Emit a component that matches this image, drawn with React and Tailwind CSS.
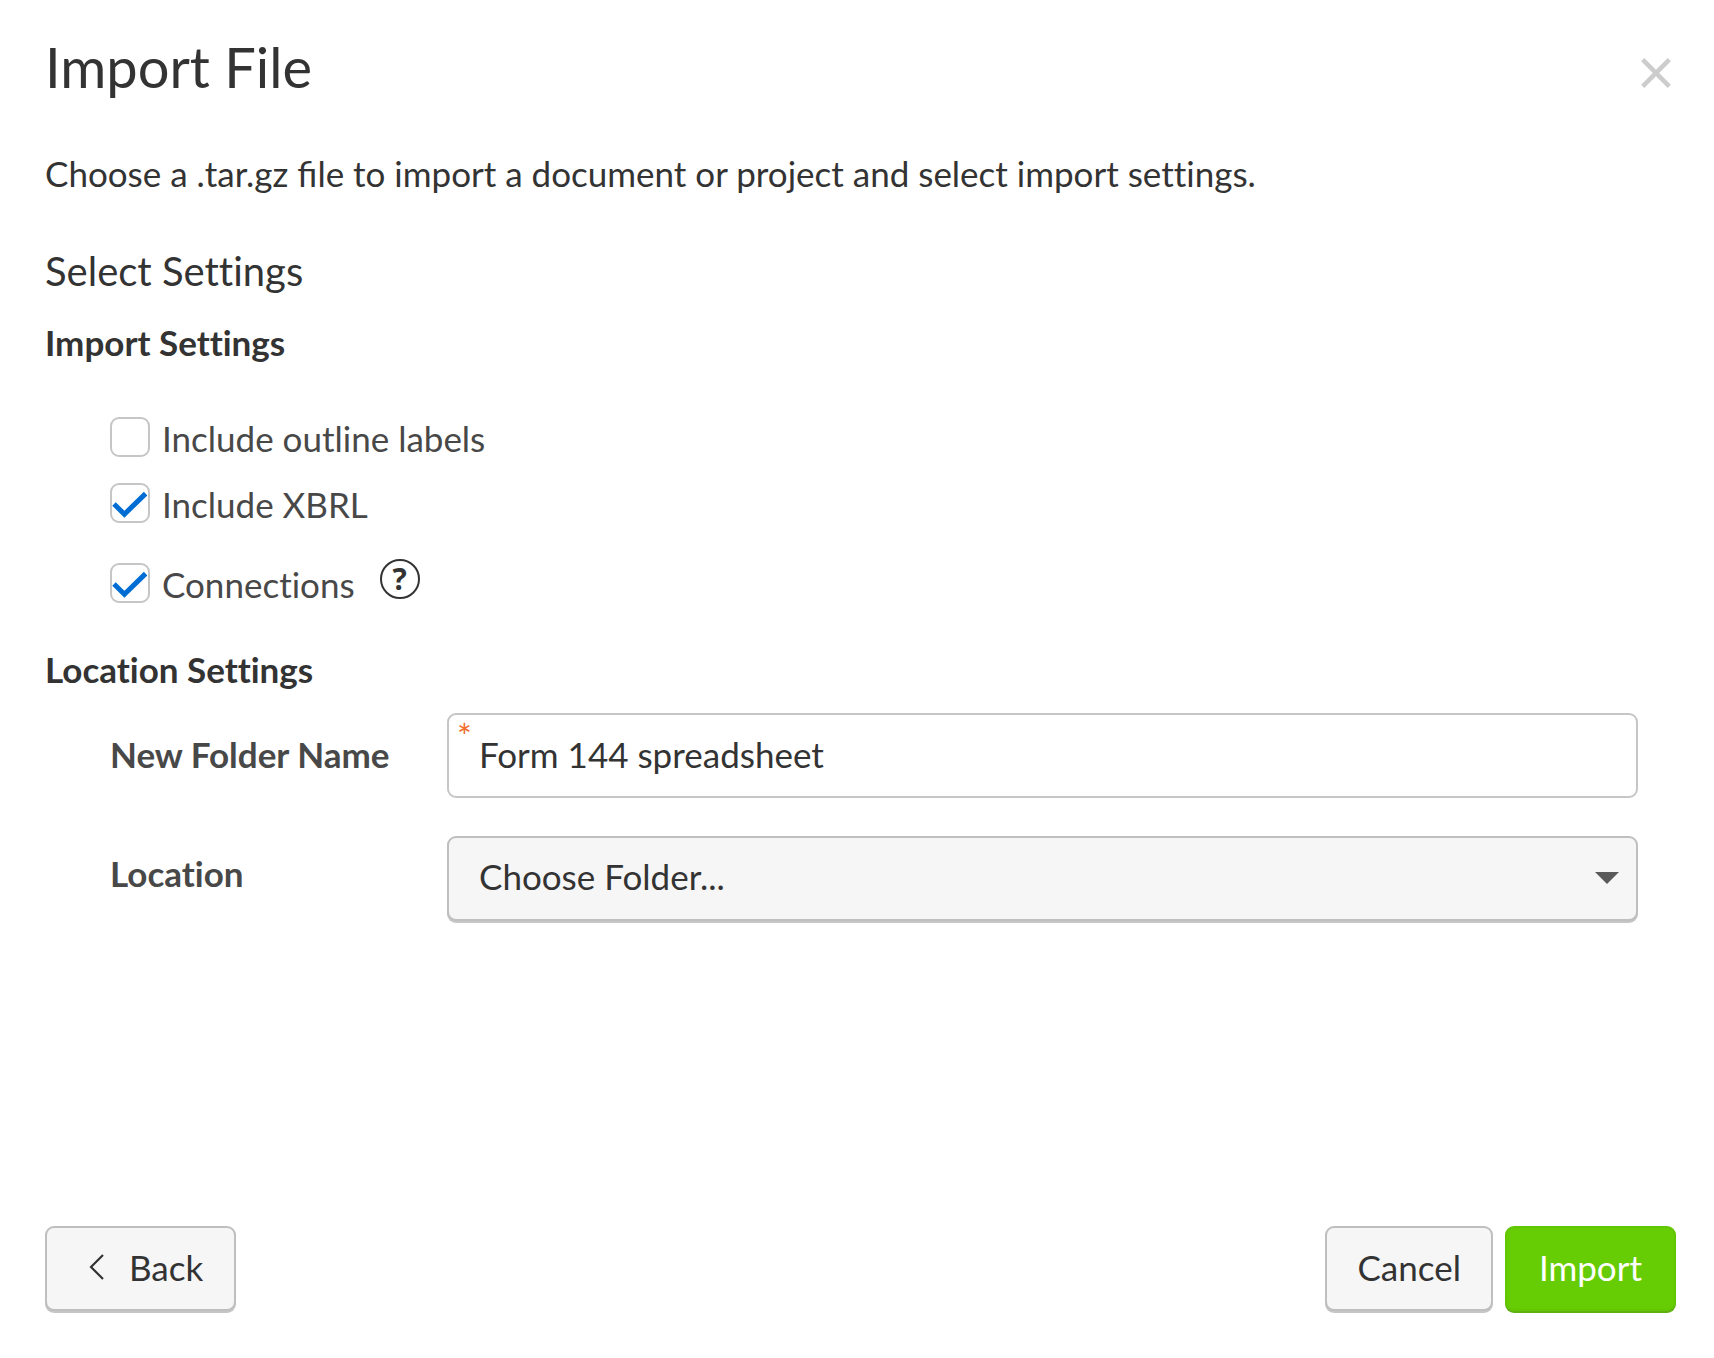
import React, { useState } from 'react'

const Checkbox = ({ id, label, defaultChecked }) => (
  <div className="flex items-start gap-3">
    <span className="grid size-10 shrink-0">
      <input
        id={id}
        type="checkbox"
        defaultChecked={defaultChecked}
        className="peer col-start-1 row-start-1 size-10 appearance-none rounded-[9px] border-2 border-[#c6c6c6] bg-white"
      />
      <svg
        viewBox="0 0 40 40"
        className="pointer-events-none invisible col-start-1 row-start-1 size-10 peer-checked:visible"
        fill="none"
        stroke="#006dd5"
        strokeWidth="5"
        aria-hidden="true"
      >
        <path d="M4 21 14.4 31.2 35.6 10.6" />
      </svg>
    </span>
    <label htmlFor={id} className="leading-[42px] text-[#484848]">{label}</label>
  </div>
)

const buttonBase = 'flex h-[85px] items-center rounded-[9px] border-2 pb-1'
const grayButton = 'border-[#bfbfbf] bg-[#f6f6f6] shadow-[0_2px_0_#c6c6c6]'

const App = () => {
  const [folderName, setFolderName] = useState('Form 144 spreadsheet')

  return (
    <form
      onSubmit={(e) => e.preventDefault()}
      className="flex min-h-screen flex-col bg-white pt-[33px] pr-[38px] pb-[47px] pl-[45px] font-['Lato',sans-serif] text-[35px] leading-[44px] text-[#333] [font-variant-ligatures:none]"
    >
      <header className="flex items-end justify-between">
        <h1 className="text-[56px] leading-[68px]">Import File</h1>
        <button type="button" aria-label="Close" className="flex h-14 w-10 items-center justify-center">
          <svg viewBox="0 0 30 30" className="size-[30px]" stroke="#cccccc" strokeWidth="4.5" aria-hidden="true">
            <path d="M1.7 1.7 28.3 28.3M28.3 1.7 1.7 28.3" />
          </svg>
        </button>
      </header>

      <p className="mt-[50px]">
        Choose a .tar.gz <span className="[font-variant-ligatures:normal]">file</span> to import a document or project and select import settings.
      </p>

      <h2 className="mt-[52px] text-[40px] leading-[48px]">Select Settings</h2>

      <h3 className="mt-[25px] font-bold">Import Settings</h3>
      <div className="mt-[53px] pl-[65px]">
        <Checkbox id="outline-labels" label="Include outline labels" />
        <div className="mt-6">
          <Checkbox id="xbrl" label="Include XBRL" defaultChecked />
        </div>
        <div className="mt-[34px] flex items-end gap-[25px]">
          <Checkbox id="connections" label="Connections" defaultChecked />
          <button type="button" aria-label="About connections" className="flex h-[46px] items-start">
            <span className="flex size-10 items-center justify-center rounded-full border-2 border-[#333] font-['Open_Sans',sans-serif] text-[30px] leading-none font-bold">
              ?
            </span>
          </button>
        </div>
      </div>

      <h3 className="mt-[42px] font-bold">Location Settings</h3>
      <div className="mt-[22px] flex flex-col gap-[38px] pr-[38px] pl-[65px]">
        <div className="grid grid-cols-[337px_1fr] items-center">
          <label htmlFor="folder-name" className="pb-1 font-bold text-[#484848]">New Folder Name</label>
          <div className="relative">
            <span className="absolute top-1.5 left-2.5 leading-8 text-[#f07030]" aria-hidden="true">*</span>
            <input
              id="folder-name"
              type="text"
              required
              value={folderName}
              onChange={(e) => setFolderName(e.target.value)}
              className="block h-[85px] w-full rounded-[9px] border-2 border-[#c6c6c6] bg-transparent px-[30px] pb-1"
            />
          </div>
        </div>
        <div className="grid grid-cols-[337px_1fr] items-start">
          <label htmlFor="location" className="pt-[15px] font-bold text-[#484848]">Location</label>
          <div className="relative">
            <select
              id="location"
              className="block h-[85px] w-full appearance-none rounded-[9px] border-2 border-[#bfbfbf] bg-[#f6f6f6] px-[30px] pb-1.5 shadow-[0_2px_0_#c6c6c6]"
            >
              <option>Choose Folder...</option>
            </select>
            <svg
              viewBox="0 0 24 12"
              className="pointer-events-none absolute top-9 right-[19px] h-3 w-6"
              fill="#5a5a5a"
              aria-hidden="true"
            >
              <path d="M0 0h24L12 12z" />
            </svg>
          </div>
        </div>
      </div>

      <footer className="mt-auto flex items-center justify-between pt-10">
        <button type="button" className={`${buttonBase} ${grayButton} gap-[25px] pr-[31px] pl-[42px]`}>
          <svg viewBox="0 0 15 26" className="h-[26px] w-[15px]" fill="none" stroke="#333" strokeWidth="2.2" aria-hidden="true">
            <path d="M14 1 2 13 14 25" />
          </svg>
          Back
        </button>
        <div className="flex gap-3">
          <button type="button" className={`${buttonBase} ${grayButton} px-[30px]`}>Cancel</button>
          <button
            type="submit"
            className={`${buttonBase} border-[#62c603] bg-[#66cc03] px-8 text-white shadow-[0_2px_0_#5fb010]`}
          >
            Import
          </button>
        </div>
      </footer>
    </form>
  )
}

export default App
